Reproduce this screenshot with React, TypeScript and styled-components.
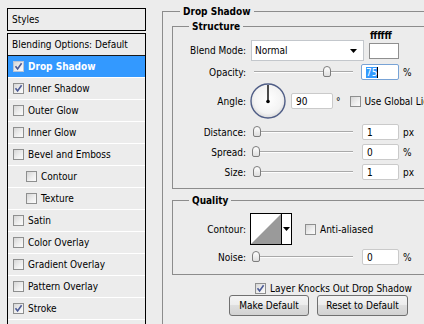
import styled, { createGlobalStyle } from 'styled-components';

const GlobalStyle = createGlobalStyle`
  body {
    margin: 0;
    background: #ececec;
    font-family: "DejaVu Sans Condensed", "Liberation Sans", sans-serif;
    font-size: 10px;
    color: #000;
    overflow: hidden;
  }
`

const Page = styled.div`
  display: flex;
  align-items: flex-start;
  height: 324px;
  overflow: hidden;
`

/* ---------- left: styles list ---------- */

const StylesPanel = styled.div`
  display: flex;
  flex-direction: column;
  flex-shrink: 0;
  width: 139px;
  height: 330px;
  margin: 8px 0 0 7px;
`

const StylesHeader = styled.div`
  height: 21px;
  line-height: 21px;
  padding-left: 4px;
  border: 1px solid #000;
`

const StyleList = styled.ul`
  flex: 1;
  margin: 2px 0 0;
  padding: 0;
  list-style: none;
  border: 1px solid #000;
  border-bottom: none;
`

const StyleItem = styled.li<{ $active?: boolean; $indent?: boolean; $head?: boolean }>`
  display: flex;
  align-items: center;
  gap: 4px;
  height: 21px;
  padding-left: ${p => (p.$head ? 4 : p.$indent ? 18 : 5)}px;
  border-bottom: 1px solid ${p => (p.$head ? '#1a1a1a' : '#fff')};
  background: ${p => (p.$active ? '#3399ff' : 'transparent')};
  color: ${p => (p.$active ? '#fff' : '#000')};
  font-weight: ${p => (p.$active ? 'bold' : 'normal')};
  white-space: nowrap;
`

const Box = styled.span<{ $light?: boolean }>`
  display: inline-flex;
  align-items: center;
  justify-content: center;
  flex-shrink: 0;
  box-sizing: border-box;
  width: 11px;
  height: 11px;
  border: 1px solid ${p => (p.$light ? '#b9c4d6' : '#8e8f8f')};
  background: linear-gradient(135deg, #d6d6d6 0%, #f0f0f0 60%, #fbfbfb 100%);
`

const Check = ({ checked, light }: { checked?: boolean; light?: boolean }) => (
  <Box $light={light}>
    {checked ? (
      <svg width="9" height="9" viewBox="0 0 9 9">
        <path d="M1.5 4.2 L3.6 7 L7.6 1.2" fill="none" stroke="#4b5a96" strokeWidth="1.6" />
      </svg>
    ) : null}
  </Box>
)

/* ---------- right: settings ---------- */

const Settings = styled.div`
  flex-shrink: 0;
  width: 300px;
  margin: 4px 0 0 16px;
`

const Group = styled.fieldset<{ $pad: string; $mt?: number }>`
  margin: ${p => p.$mt ?? 0}px 0 0;
  min-width: 0;
  padding: ${p => p.$pad};
  border: 1px solid #8c8c8c;
`

const GroupTitle = styled.legend<{ $offset: number }>`
  margin-left: ${p => p.$offset}px;
  padding: 0 3px;
  font-weight: bold;
  line-height: 15px;
`

const Row = styled.div<{ $h: number; $mt?: number; $ml?: number }>`
  display: flex;
  align-items: center;
  height: ${p => p.$h}px;
  margin-top: ${p => p.$mt ?? 0}px;
  margin-left: ${p => p.$ml ?? 0}px;
  white-space: nowrap;
`

const Label = styled.span`
  flex-shrink: 0;
  width: 73px;
  margin-right: 5px;
  text-align: right;
`

const Select = styled.div`
  display: flex;
  align-items: center;
  justify-content: space-between;
  box-sizing: border-box;
  width: 113px;
  height: 21px;
  padding: 0 6px 0 3px;
  background: #fff;
  border: 1px solid #c3c7cc;
`

const Swatch = styled.div`
  position: relative;
  box-sizing: border-box;
  width: 30px;
  height: 16px;
  margin-left: 5px;
  background: #fff;
  border: 1px solid #8f8f8f;
`

const SwatchHex = styled.span`
  position: absolute;
  left: 0;
  bottom: 100%;
  margin-bottom: 3px;
  font-weight: bold;
  line-height: 11px;
`

const Track = styled.div<{ $w: number }>`
  position: relative;
  flex-shrink: 0;
  width: ${p => p.$w}px;
  height: 12px;
  &::before {
    content: "";
    position: absolute;
    left: 3px;
    right: 3px;
    top: 5px;
    border-top: 1px solid #a9a9a9;
    border-bottom: 1px solid #fdfdfd;
  }
`

const Thumb = styled.span`
  position: absolute;
  top: 0;
  box-sizing: border-box;
  width: 8px;
  height: 11px;
  border: 1px solid #7d7d7d;
  border-radius: 4px 4px 2px 2px;
  background: linear-gradient(#ffffff, #dedede);
`

const Slider = ({ value, width = 105 }: { value: number; width?: number }) => (
  <Track $w={width}>
    <Thumb style={{ left: 1 + Math.round((value / 100) * (width - 10)) }} />
  </Track>
)

const Field = styled.span<{ $w: number; $focus?: boolean; $ml?: number }>`
  display: inline-flex;
  align-items: center;
  flex-shrink: 0;
  box-sizing: border-box;
  width: ${p => p.$w}px;
  height: 16px;
  margin-left: ${p => p.$ml ?? 0}px;
  padding-left: 4px;
  background: #fff;
  border: 1px solid ${p => (p.$focus ? '#78a3d6' : '#cacaca')};
  border-radius: 2px;
`

const Selected = styled.span`
  background: #3399ff;
  color: #fff;
  border-right: 1px solid #000;
`

const Unit = styled.span<{ $ml?: number }>`
  margin-left: ${p => p.$ml ?? 4}px;
`

const CheckLabel = styled.span`
  margin-left: 4px;
`

const Spacer = styled.span<{ $w: number }>`
  display: inline-block;
  flex-shrink: 0;
  width: ${p => p.$w}px;
`

const ContourPicker = styled.div`
  display: flex;
  flex-shrink: 0;
  box-sizing: border-box;
  width: 42px;
  height: 32px;
  margin-left: -1px;
  border: 1px solid #000;
  background: #fff;
`

const ContourArrow = styled.div`
  display: flex;
  align-items: center;
  justify-content: center;
  flex: 1;
  border-left: 1px solid #000;
`

const Button = styled.button`
  box-sizing: border-box;
  height: 21px;
  padding: 0;
  font: inherit;
  color: #000;
  border: 1px solid #707070;
  border-radius: 3px;
  background: linear-gradient(#f4f4f4 0%, #ececec 50%, #dedede 50%, #d2d2d2 100%);
`

const ButtonRow = styled.div`
  display: flex;
  gap: 8px;
  margin-left: 57px;
`

const DownArrow = () => (
  <svg width="7" height="4" viewBox="0 0 7 4">
    <path d="M0 0 H7 L3.5 4 Z" fill="#000" />
  </svg>
)

const AngleDial = ({ angle }: { angle: number }) => {
  const r = (angle * Math.PI) / 180
  const x = 18 + Math.cos(r) * 16
  const y = 18 - Math.sin(r) * 16
  return (
    <svg width="36" height="36" viewBox="0 0 36 36" style={{ flexShrink: 0, marginLeft: -1 }}>
      <defs>
        <radialGradient id="dialFill" cx="50%" cy="45%" r="55%">
          <stop offset="0%" stopColor="#ffffff" />
          <stop offset="75%" stopColor="#f3f3f3" />
          <stop offset="100%" stopColor="#d9d9d9" />
        </radialGradient>
      </defs>
      <circle cx="18" cy="18" r="17" fill="url(#dialFill)" stroke="#4f5d86" strokeWidth="1.4" />
      <line x1="18" y1="18.5" x2={x} y2={y} stroke="#000" strokeWidth="1.4" />
      <circle cx="18" cy="18.5" r="1.8" fill="#000" />
    </svg>
  )
}

const styleItems = [
  { name: 'Drop Shadow', checked: true, active: true },
  { name: 'Inner Shadow', checked: true },
  { name: 'Outer Glow' },
  { name: 'Inner Glow' },
  { name: 'Bevel and Emboss' },
  { name: 'Contour', indent: true },
  { name: 'Texture', indent: true },
  { name: 'Satin' },
  { name: 'Color Overlay' },
  { name: 'Gradient Overlay' },
  { name: 'Pattern Overlay' },
  { name: 'Stroke', checked: true },
  { name: '' },
]

const sliderRows = [
  { label: 'Distance:', value: 1, unit: 'px', mt: 3 },
  { label: 'Spread:', value: 0, unit: '%' },
  { label: 'Size:', value: 1, unit: 'px' },
]

const App = () => (
  <Page>
    <GlobalStyle />
    <StylesPanel>
      <StylesHeader>Styles</StylesHeader>
      <StyleList>
        <StyleItem $head>Blending Options: Default</StyleItem>
        {styleItems.map(item => (
          <StyleItem key={item.name || 'end'} $active={item.active} $indent={item.indent}>
            {item.name ? (
              <>
                <Check checked={item.checked} light={item.active} />
                {item.name}
              </>
            ) : null}
          </StyleItem>
        ))}
      </StyleList>
    </StylesPanel>

    <Settings>
      <Group $pad="0 0 30px 9px">
        <GroupTitle $offset={8}>Drop Shadow</GroupTitle>

        <Group $pad="0 0 6px 0">
          <GroupTitle $offset={16}>Structure</GroupTitle>
          <Row $h={21} $mt={6}>
            <Label>Blend Mode:</Label>
            <Select>
              <span>Normal</span>
              <DownArrow />
            </Select>
            <Swatch>
              <SwatchHex>ffffff</SwatchHex>
            </Swatch>
          </Row>
          <Row $h={22}>
            <Label>Opacity:</Label>
            <Slider value={75} />
            <Field $w={38} $focus $ml={5}>
              <Selected>75</Selected>
            </Field>
            <Unit>%</Unit>
          </Row>
          <Row $h={36}>
            <Label>Angle:</Label>
            <AngleDial angle={90} />
            <Field $w={42} $ml={5}>90</Field>
            <Unit $ml={3}>°</Unit>
            <Spacer $w={9} />
            <Check />
            <CheckLabel>Use Global Light</CheckLabel>
          </Row>
          {sliderRows.map(row => (
            <Row key={row.label} $h={20} $mt={row.mt}>
              <Label>{row.label}</Label>
              <Slider value={row.value} />
              <Field $w={37} $ml={6}>{row.value}</Field>
              <Unit>{row.unit}</Unit>
            </Row>
          ))}
        </Group>

        <Group $pad="0 0 7px 0" $mt={4}>
          <GroupTitle $offset={16}>Quality</GroupTitle>
          <Row $h={32} $mt={5}>
            <Label>Contour:</Label>
            <ContourPicker>
              <svg width="30" height="30" viewBox="0 0 30 30">
                <rect width="30" height="30" fill="#fff" />
                <path d="M0 30 L30 0 L30 30 Z" fill="#9a9a9a" />
              </svg>
              <ContourArrow>
                <DownArrow />
              </ContourArrow>
            </ContourPicker>
            <Spacer $w={13} />
            <Check />
            <CheckLabel>Anti-aliased</CheckLabel>
          </Row>
          <Row $h={20} $mt={2}>
            <Label>Noise:</Label>
            <Slider value={0} />
            <Field $w={37} $ml={6}>0</Field>
            <Unit>%</Unit>
          </Row>
        </Group>

        <Row $h={14} $mt={6} $ml={83}>
          <Check checked />
          <CheckLabel>Layer Knocks Out Drop Shadow</CheckLabel>
        </Row>
        <ButtonRow>
          <Button style={{ width: 80 }}>Make Default</Button>
          <Button style={{ width: 91 }}>Reset to Default</Button>
        </ButtonRow>
      </Group>
    </Settings>
  </Page>
)

export default App
